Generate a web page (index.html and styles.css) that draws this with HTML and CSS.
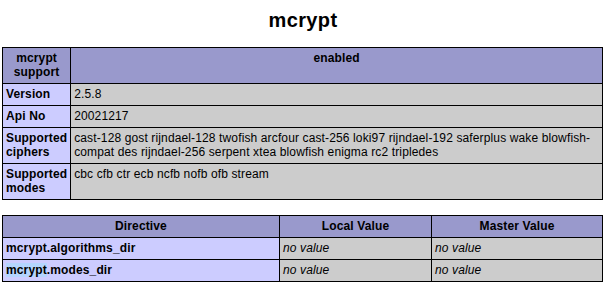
FILE: index.html
```html
<!DOCTYPE html>
<html>
<head>
<meta charset="utf-8">
<title>mcrypt</title>
<link rel="stylesheet" href="styles.css">
</head>
<body>
<div class="center">
  <h2 class="title">mcrypt</h2>
  <table class="info">
    <tr class="h"><th class="first">mcrypt support</th><th>enabled</th></tr>
    <tr><td class="e">Version </td><td class="v">2.5.8 </td></tr>
    <tr><td class="e">Api No </td><td class="v">20021217 </td></tr>
    <tr><td class="e">Supported ciphers </td><td class="v">cast-128 gost rijndael-128 twofish arcfour cast-256 loki97 rijndael-192 saferplus wake blowfish-compat des rijndael-256 serpent xtea blowfish enigma rc2 tripledes </td></tr>
    <tr><td class="e">Supported modes </td><td class="v">cbc cfb ctr ecb ncfb nofb ofb stream </td></tr>
  </table>
  <table class="info directives">
    <colgroup><col class="c1"><col class="c2"><col class="c3"></colgroup>
    <tr class="h"><th>Directive</th><th>Local Value</th><th>Master Value</th></tr>
    <tr><td class="e">mcrypt.algorithms_dir</td><td class="v"><i>no value</i></td><td class="v"><i>no value</i></td></tr>
    <tr><td class="e"><span class="sel">mcrypt</span>.modes_dir</td><td class="v"><i>no value</i></td><td class="v"><i>no value</i></td></tr>
  </table>
</div>
</body>
</html>
```

FILE: styles.css
```css
html, body {
  margin: 0;
  padding: 0;
  background: #ffffff;
  color: #000000;
}
.center {
  padding: 9px 0 0 0;
  font-family: "Liberation Sans", Arial, sans-serif;
}
.title {
  margin: 0 0 15px 0;
  font-size: 20px;
  line-height: 23px;
  font-weight: bold;
  text-align: center;
  letter-spacing: 0.4px;
}
table.info {
  border-collapse: collapse;
  width: 601px;
  margin: 0 0 0 2px;
  text-align: left;
}
table.directives {
  margin-top: 15px;
}
.c1 { width: 277px; }
.c2 { width: 152px; }
td, th {
  border: 1px solid #000000;
  font-size: 12px;
  line-height: 14px;
  letter-spacing: 0.13px;
  vertical-align: baseline;
  padding: 3px 3px 4px 3px;
}
th {
  text-align: center;
}
.h {
  background-color: #9999cc;
  font-weight: bold;
}
.e {
  background-color: #ccccff;
  font-weight: bold;
  width: 1px;
}
.directives .e {
  width: auto;
}
.v {
  background-color: #cccccc;
}
.first {
  width: 1px;
}
.sel {
  background-color: #b4d5fe;
}
```
